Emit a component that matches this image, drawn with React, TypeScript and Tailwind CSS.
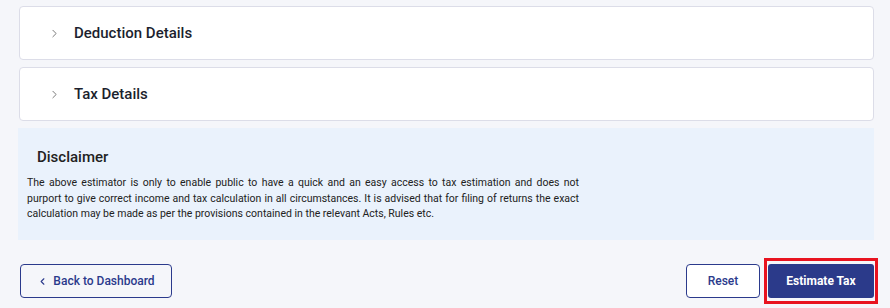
import { ChevronRight, ChevronLeft } from "lucide-react";

function AccordionCard({ title }: { title: string }) {
  return (
    <div className="h-[54px] rounded-[4px] border border-[#dcdde8] bg-white flex items-center pl-[28px]">
      <ChevronRight size={13} strokeWidth={1.6} className="text-[#666] mr-[13px]" />
      <span className="text-[15px] font-medium text-[#1c1f2e]">{title}</span>
    </div>
  );
}

export default function App() {
  return (
    <div
      className="w-[890px] h-[308px] bg-[#f5f6fa] overflow-hidden"
      style={{ fontFamily: "Roboto, 'Liberation Sans', sans-serif" }}
    >
      <div className="ml-[19px] mr-[16px] pt-[6px] flex flex-col gap-[7px]">
        <AccordionCard title="Deduction Details" />
        <AccordionCard title="Tax Details" />
      </div>

      <div className="ml-[18px] mr-[16px] mt-[7px] h-[112px] bg-[#eaf2fc] pt-[19px] pl-[9px]">
        <h3 className="ml-[10px] text-[15px] font-medium text-[#222] leading-[20px]">Disclaimer</h3>
        <p className="mt-[8px] w-[552px] text-[10.5px] leading-[15.5px] text-[#222] text-justify">
          The above estimator is only to enable public to have a quick and an easy access to tax estimation and does not
          purport to give correct income and tax calculation in all circumstances. It is advised that for filing of returns the exact
          calculation may be made as per the provisions contained in the relevant Acts, Rules etc.
        </p>
      </div>

      <div className="ml-[20px] mr-[12px] mt-[18px] flex items-center justify-between">
        <button className="h-[34px] w-[152px] rounded-[4px] border border-[#2b3a8c] text-[#2b3a8c] text-[12px] font-medium flex items-center justify-center gap-[5px]">
          <ChevronLeft size={11} strokeWidth={2.4} />
          Back to Dashboard
        </button>
        <div className="flex items-center gap-[4px]">
          <button className="h-[34px] w-[74px] rounded-[4px] border border-[#2b3a8c] text-[#2b3a8c] text-[12px] font-medium bg-white">
            Reset
          </button>
          <div className="border-[3px] border-[#e8131f] px-[1px] py-[3px]">
            <button className="h-[34px] w-[106px] rounded-[3px] bg-[#2b3a8a] text-white text-[12px] font-bold">
              Estimate Tax
            </button>
          </div>
        </div>
      </div>
    </div>
  );
}
